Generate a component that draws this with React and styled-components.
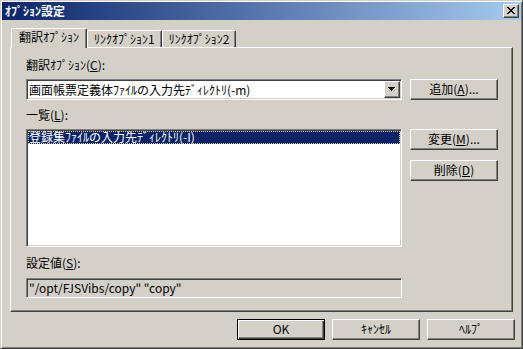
import React from "react";
import styled, { createGlobalStyle } from "styled-components";

const GlobalStyle = createGlobalStyle`
  html, body {
    margin: 0;
    padding: 0;
    background: #d4d0c8;
  }
  body {
    font-family: "Noto Sans CJK JP", "Noto Sans", sans-serif;
    font-size: 12px;
    color: #000;
  }
`;

const face = "#d4d0c8";

const Window = styled.div`
  box-sizing: border-box;
  width: 523px;
  height: 349px;
  padding: 1px;
  background: ${face};
  border: 1px solid;
  border-color: ${face} #404040 #404040 ${face};
  box-shadow: inset 1px 1px 0 #fff, inset -1px -1px 0 #808080;
  display: flex;
  flex-direction: column;
`;

const TitleBar = styled.div`
  height: 18px;
  flex: none;
  display: flex;
  align-items: center;
  justify-content: space-between;
  padding: 0 2px 0 3px;
  background: linear-gradient(to right, #0a246a, #a6caf0);
`;

const Title = styled.span`
  color: #fff;
  font-weight: 700;
  font-size: 12px;
  line-height: 14px;
`;

const CloseButton = styled.div`
  box-sizing: border-box;
  width: 16px;
  height: 14px;
  background: ${face};
  border: 1px solid;
  border-color: #fff #404040 #404040 #fff;
  box-shadow: inset -1px -1px 0 #808080;
  display: flex;
  align-items: center;
  justify-content: center;
  padding: 0 1px 1px 0;
`;

const Body = styled.div`
  flex: 1;
  display: flex;
  flex-direction: column;
  padding: 8px 8px 0 8px;
`;

const TabRow = styled.div`
  height: 19px;
  flex: none;
  display: flex;
  align-items: flex-end;
  padding-left: 1px;
`;

const Tab = styled.div`
  box-sizing: border-box;
  position: relative;
  z-index: ${(p) => (p.$active ? 1 : 0)};
  height: ${(p) => (p.$active ? 20 : 17)}px;
  margin-bottom: ${(p) => (p.$active ? -1 : 0)}px;
  padding: ${(p) => (p.$active ? "0 7px 3px" : "0 6px 1px")};
  display: flex;
  align-items: center;
  background: ${face};
  border-top: 1px solid #fff;
  border-left: 1px solid #fff;
  border-right: 1px solid #404040;
  border-radius: 2px 2px 0 0;
  box-shadow: inset -1px 0 0 #808080;
  line-height: 14px;
  white-space: nowrap;
`;

const Pane = styled.div`
  box-sizing: border-box;
  height: 265px;
  flex: none;
  border: 1px solid;
  border-color: #fff #404040 #404040 #fff;
  box-shadow: inset -1px -1px 0 #808080;
  padding: 10px 13px 0 15px;
  display: flex;
  flex-direction: column;
`;

const Label = styled.div`
  height: 14px;
  line-height: 14px;
  margin-bottom: ${(p) => p.$after}px;
  white-space: nowrap;
`;

const Row = styled.div`
  display: flex;
  gap: 8px;
  align-items: flex-start;
  margin-bottom: ${(p) => p.$after || 0}px;
`;

const Sunken = styled.div`
  box-sizing: border-box;
  width: 376px;
  height: ${(p) => p.$h}px;
  background: ${(p) => (p.$readonly ? face : "#fff")};
  border: 1px solid;
  border-color: #808080 #fff #fff #808080;
  box-shadow: inset 1px 1px 0 #404040, inset -1px -1px 0 ${face};
  padding: 1px;
  display: flex;
  flex-direction: ${(p) => (p.$list ? "column" : "row")};
  align-items: ${(p) => (p.$list ? "stretch" : "center")};
`;

const FieldText = styled.span`
  flex: 1;
  padding-left: 1px;
  line-height: 16px;
  white-space: nowrap;
`;

const DropButton = styled.div`
  box-sizing: border-box;
  width: 16px;
  height: 17px;
  align-self: flex-start;
  background: ${face};
  border: 1px solid;
  border-color: #fff #404040 #404040 #fff;
  box-shadow: inset -1px -1px 0 #808080;
  display: flex;
  align-items: center;
  justify-content: center;
  padding: 0 1px 1px 0;
`;

const ListItem = styled.div`
  box-sizing: border-box;
  height: 13px;
  line-height: 12px;
  padding-left: 1px;
  color: ${(p) => (p.$selected ? "#fff" : "#000")};
  background: ${(p) => (p.$selected ? "#0a246a" : "transparent")};
  outline: ${(p) => (p.$selected ? "1px dotted #d8cda4" : "none")};
  outline-offset: -1px;
  white-space: nowrap;
`;

const ButtonColumn = styled.div`
  display: flex;
  flex-direction: column;
  gap: 10px;
`;

const Button = styled.div`
  box-sizing: border-box;
  width: 88px;
  height: 21px;
  background: ${face};
  border: 1px solid;
  border-color: ${(p) => (p.$default ? "#000" : "#fff #404040 #404040 #fff")};
  box-shadow: ${(p) =>
    p.$default
      ? "inset 1px 1px 0 #fff, inset -1px -1px 0 #404040, inset -2px -2px 0 #808080"
      : "inset -1px -1px 0 #808080"};
  display: flex;
  align-items: center;
  justify-content: center;
  line-height: 14px;
  padding-bottom: 1px;
  white-space: nowrap;
`;

const Footer = styled.div`
  display: flex;
  justify-content: flex-end;
  gap: 7px;
  margin: 7px -2px 0 0;
`;

const xPixels = [
  "11....11",
  ".11..11.",
  "..1111..",
  "...11...",
  "..1111..",
  ".11..11.",
  "11....11",
];

const arrowPixels = ["1111111", ".11111.", "..111..", "...1..."];

const PixelGlyph = ({ rows }) => (
  <svg
    width={rows[0].length}
    height={rows.length}
    viewBox={`0 0 ${rows[0].length} ${rows.length}`}
    shapeRendering="crispEdges"
  >
    {rows.map((r, y) =>
      r.split("").map((c, x) =>
        c === "1" ? <rect key={`${x}-${y}`} x={x} y={y} width="1" height="1" fill="#000" /> : null
      )
    )}
  </svg>
);

export default function App() {
  return (
    <>
      <GlobalStyle />
      <Window>
        <TitleBar>
          <Title>ｵﾌﾟｼｮﾝ設定</Title>
          <CloseButton>
            <PixelGlyph rows={xPixels} />
          </CloseButton>
        </TitleBar>
        <Body>
          <TabRow>
            <Tab $active>翻訳ｵﾌﾟｼｮﾝ</Tab>
            <Tab>ﾘﾝｸｵﾌﾟｼｮﾝ1</Tab>
            <Tab>ﾘﾝｸｵﾌﾟｼｮﾝ2</Tab>
          </TabRow>
          <Pane>
            <Label $after={7}>
              翻訳ｵﾌﾟｼｮﾝ(<u>C</u>):
            </Label>
            <Row $after={8}>
              <Sunken $h={21}>
                <FieldText>画面帳票定義体ﾌｧｲﾙの入力先ﾃﾞｨﾚｸﾄﾘ(-m)</FieldText>
                <DropButton>
                  <PixelGlyph rows={arrowPixels} />
                </DropButton>
              </Sunken>
              <Button>
                追加(<u>A</u>)...
              </Button>
            </Row>
            <Label $after={7}>
              一覧(<u>L</u>):
            </Label>
            <Row $after={9}>
              <Sunken $h={118} $list>
                <ListItem $selected>登録集ﾌｧｲﾙの入力先ﾃﾞｨﾚｸﾄﾘ(-I)</ListItem>
              </Sunken>
              <ButtonColumn>
                <Button>
                  変更(<u>M</u>)...
                </Button>
                <Button>
                  削除(<u>D</u>)
                </Button>
              </ButtonColumn>
            </Row>
            <Label $after={8}>
              設定値(<u>S</u>):
            </Label>
            <Row>
              <Sunken $h={20} $readonly>
                <FieldText>"/opt/FJSVibs/copy" "copy"</FieldText>
              </Sunken>
            </Row>
          </Pane>
          <Footer>
            <Button $default>OK</Button>
            <Button>ｷｬﾝｾﾙ</Button>
            <Button>ﾍﾙﾌﾟ</Button>
          </Footer>
        </Body>
      </Window>
    </>
  );
}
